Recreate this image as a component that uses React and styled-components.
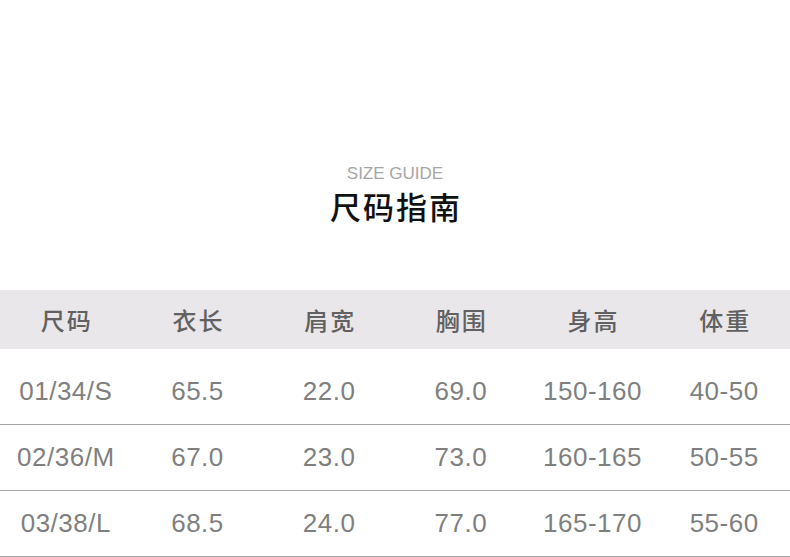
import React from 'react';
import styled, { createGlobalStyle } from 'styled-components';

const GlobalStyle = createGlobalStyle`
  html, body {
    margin: 0;
    padding: 0;
    background: #ffffff;
  }
  body {
    font-family: "Liberation Sans", "Noto Sans CJK SC", sans-serif;
  }
`;

const Page = styled.div`
  width: 790px;
  height: 557px;
  overflow: hidden;
  padding-top: 162px;
  box-sizing: border-box;
`;

const Heading = styled.div`
  display: flex;
  flex-direction: column;
  align-items: center;
`;

const SubTitle = styled.div`
  font-size: 17px;
  line-height: 24px;
  color: #a6a6a6;
  font-weight: 300;
`;

const Title = styled.div`
  margin-top: 0;
  font-size: 31px;
  line-height: 40px;
  color: #111;
  font-family: "Noto Sans CJK SC", sans-serif;
  font-weight: 500;
  letter-spacing: 2px;
  padding-left: 2px;
`;

const Table = styled.div`
  margin-top: 64px;
  width: 790px;
`;

const HeadRow = styled.div`
  display: grid;
  grid-template-columns: repeat(6, 1fr);
  height: 59px;
  align-items: center;
  background: #e9e7ea;
`;

const HeadCell = styled.div`
  text-align: center;
  font-family: "Noto Sans CJK SC", sans-serif;
  font-size: 24px;
  font-weight: 500;
  color: #616161;
  letter-spacing: 2px;
  padding-left: 2px;
`;

const Body = styled.div`
  padding-top: 10px;
`;

const Row = styled.div`
  display: grid;
  grid-template-columns: repeat(6, 1fr);
  height: 65px;
  align-items: center;
  border-bottom: 1px solid #a3a3a3;
`;

const Cell = styled.div`
  text-align: center;
  font-size: 26px;
  color: #7f7f7f;
  letter-spacing: 0.5px;
`;

const headers = ['尺码', '衣长', '肩宽', '胸围', '身高', '体重'];

const rows = [
  ['01/34/S', '65.5', '22.0', '69.0', '150-160', '40-50'],
  ['02/36/M', '67.0', '23.0', '73.0', '160-165', '50-55'],
  ['03/38/L', '68.5', '24.0', '77.0', '165-170', '55-60'],
];

export default function App() {
  return (
    <>
      <GlobalStyle />
      <Page>
        <Heading>
          <SubTitle>SIZE GUIDE</SubTitle>
          <Title>尺码指南</Title>
        </Heading>
        <Table>
          <HeadRow>
            {headers.map(h => <HeadCell key={h}>{h}</HeadCell>)}
          </HeadRow>
          <Body>
            {rows.map(r => (
              <Row key={r[0]}>
                {r.map((v, i) => <Cell key={i}>{v}</Cell>)}
              </Row>
            ))}
          </Body>
        </Table>
      </Page>
    </>
  );
}
